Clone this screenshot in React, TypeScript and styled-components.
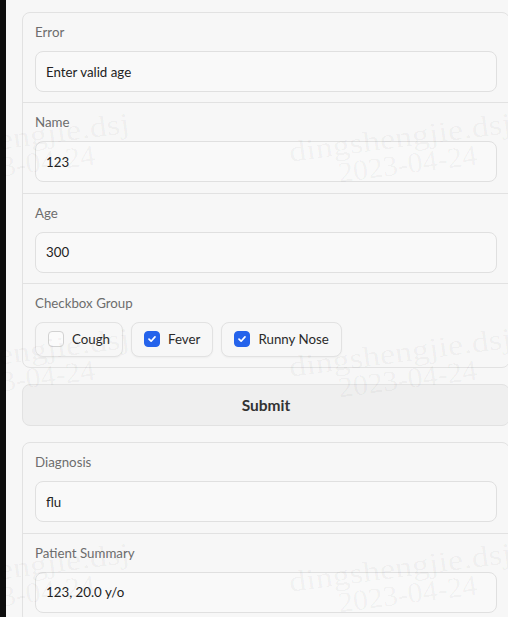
import React from 'react';
import styled, { createGlobalStyle } from 'styled-components';

const GlobalStyle = createGlobalStyle`
  html, body { margin: 0; padding: 0; overflow: hidden; background: #f7f7f7; }
  body { font-family: Lato, "Open Sans", sans-serif; }
  * { box-sizing: border-box; }
`;

const Shell = styled.div`
  position: relative;
  display: flex;
  align-items: flex-start;
  width: 508px;
  height: 617px;
  overflow: hidden;
  background: #f7f7f7;
`;

const EdgeStrip = styled.div`
  flex: none;
  align-self: stretch;
  width: 6px;
  background: #0d0d0d;
`;

const Main = styled.main`
  flex: none;
  width: 504px;
  padding: 12px 0 0 16px;
  display: flex;
  flex-direction: column;
  gap: 16px;
  & > * {
    flex-shrink: 0;
  }
`;

const Panel = styled.section`
  width: 488px;
  border: 1px solid #e2e2e2;
  border-radius: 8px;
  background: #f7f7f7;
  display: flex;
  flex-direction: column;
`;

const Block = styled.div`
  padding: 9px 12px 10.33px;
  display: flex;
  flex-direction: column;
  gap: 9px;
  & + & {
    border-top: 1px solid #e2e2e2;
  }
`;

const Label = styled.span`
  font-size: 13.3px;
  line-height: 20px;
  color: #6d6d6d;
`;

const Field = styled.input`
  width: 100%;
  height: 41px;
  flex-shrink: 0;
  border: 1px solid #e0e0e0;
  border-radius: 8px;
  background: #f9f9f9;
  padding: 0 10px;
  font-family: inherit;
  font-size: 13.3px;
  color: #222;
  outline: none;
`;

const ChoiceRow = styled.div`
  display: flex;
  gap: 8px;
`;

const Choice = styled.label`
  height: 35px;
  padding: 0 12px;
  display: flex;
  align-items: center;
  gap: 8px;
  border: 1px solid #e2e2e2;
  border-radius: 8px;
  background: #f7f7f7;
  box-shadow: 0 1px 2px rgba(0, 0, 0, 0.04);
  font-size: 13.3px;
  color: #2a2a2a;
`;

const Box = styled.span<{ $checked: boolean }>`
  width: 16px;
  height: 16px;
  border-radius: 4px;
  display: flex;
  align-items: center;
  justify-content: center;
  border: 1px solid ${(p) => (p.$checked ? '#2563eb' : '#d2d2d2')};
  background: ${(p) => (p.$checked ? '#2563eb' : '#fbfbfb')};
`;

const SubmitButton = styled.button`
  width: 488px;
  height: 42px;
  border: 1px solid #e2e2e2;
  border-radius: 8px;
  background: #efefef;
  font-family: inherit;
  font-size: 15.5px;
  font-weight: 700;
  color: #333;
`;

const Watermark = styled.svg`
  position: absolute;
  inset: 0;
  pointer-events: none;
  font-family: "Liberation Serif", serif;
  font-size: 29px;
  fill: rgba(0, 0, 0, 0.045);
`;

const fields1 = [
  { label: 'Error', value: 'Enter valid age' },
  { label: 'Name', value: '123' },
  { label: 'Age', value: '300' },
];

const choices = [
  { name: 'Cough', checked: false },
  { name: 'Fever', checked: true },
  { name: 'Runny Nose', checked: true },
];

const fields2 = [
  { label: 'Diagnosis', value: 'flu' },
  { label: 'Patient Summary', value: '123, 20.0 y/o' },
];

const marks = [
  [403, 160], [21, 160],
  [403, 375], [21, 375],
  [403, 590], [21, 590],
];

function Check() {
  return (
    <svg width="10" height="10" viewBox="0 0 10 10">
      <path d="M2 5.2 L4.1 7.2 L8 2.9" fill="none" stroke="#fff" strokeWidth="1.7" strokeLinecap="round" strokeLinejoin="round" />
    </svg>
  );
}

export default function App() {
  return (
    <Shell>
      <GlobalStyle />
      <EdgeStrip />
      <Main>
        <Panel>
          {fields1.map((f) => (
            <Block key={f.label}>
              <Label>{f.label}</Label>
              <Field readOnly defaultValue={f.value} />
            </Block>
          ))}
          <Block>
            <Label>Checkbox Group</Label>
            <ChoiceRow>
              {choices.map((c) => (
                <Choice key={c.name}>
                  <Box $checked={c.checked}>{c.checked && <Check />}</Box>
                  {c.name}
                </Choice>
              ))}
            </ChoiceRow>
          </Block>
        </Panel>
        <SubmitButton>Submit</SubmitButton>
        <Panel>
          {fields2.map((f) => (
            <Block key={f.label}>
              <Label>{f.label}</Label>
              <Field readOnly defaultValue={f.value} />
            </Block>
          ))}
        </Panel>
      </Main>
      <Watermark width="508" height="617" viewBox="0 0 508 617">
        {marks.map(([cx, cy], i) => (
          <g key={i} transform={`rotate(-7.5 ${cx} ${cy})`}>
            <text x={cx} y={cy - 13} textAnchor="middle" textLength={224} lengthAdjust="spacingAndGlyphs">
              dingshengjie.dsj
            </text>
            <text x={cx + 4} y={cy + 14} textAnchor="middle" textLength={140} lengthAdjust="spacingAndGlyphs">
              2023-04-24
            </text>
          </g>
        ))}
      </Watermark>
    </Shell>
  );
}
